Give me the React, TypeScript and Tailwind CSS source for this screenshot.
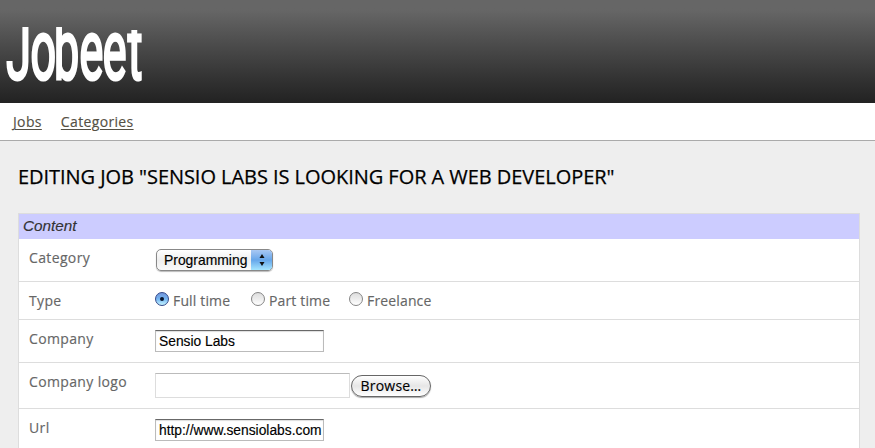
import type { ReactNode } from "react";

function Logo() {
  return (
    <svg role="img" aria-label="Jobeet" className="block h-[103px] w-[160px]" viewBox="0 0 160 103">
      <defs>
        <clipPath id="wordmark-top">
          <path d="M0 27H127V30H143.5V84H0Z" />
        </clipPath>
      </defs>
      <g clipPath="url(#wordmark-top)">
        <text
          transform="scale(0.54 1)"
          x="11.5 56.5 100 147 190.5 236.5"
          y="79.5"
          className="fill-white stroke-white font-[Roboto] text-[83px] font-normal"
          strokeWidth="3.2"
        >
          Jobeet
        </text>
      </g>
    </svg>
  );
}

function Radio({ label, checked = false, className = "" }: { label: string; checked?: boolean; className?: string }) {
  return (
    <label className={`flex items-start ${className}`}>
      <span
        className={`mt-[10px] flex h-[14px] w-[14px] shrink-0 items-center justify-center rounded-full border ${
          checked
            ? "border-[#314789] bg-linear-to-b from-[#7196db] via-[#75b5f1] to-[#c5f5ff]"
            : "border-[#858585] bg-linear-to-b from-[#dedede] via-[#ededed] to-white"
        }`}
      >
        {checked && <span className="h-[4px] w-[4px] rounded-full bg-[#07142e]" />}
      </span>
      <span className="ml-[4px] mt-[9px] whitespace-nowrap leading-5 tracking-[0.15px]">{label}</span>
    </label>
  );
}

function Row({ label, height, children }: { label: string; height: string; children: ReactNode }) {
  return (
    <div className={`flex border-b border-[#dddddd] ${height}`}>
      <div className="w-[136px] shrink-0 pl-[10px] pt-[9px] leading-5 tracking-[0.36px]">{label}</div>
      {children}
    </div>
  );
}

function TextInput({ value }: { value: string }) {
  return (
    <input
      readOnly
      value={value}
      className="mt-[10px] h-[22px] w-[169px] border border-[#bbbbbb] border-t-[#686868] bg-white pl-[3px] pr-px font-['Liberation_Sans'] text-[13.8px] text-black shadow-[inset_0_1px_1px_#dddddd] outline-none"
    />
  );
}

export default function App() {
  return (
    <div className="h-[448px] overflow-hidden bg-[#eeeeee] font-['Open_Sans',sans-serif] text-[14px] text-[#666666] [-webkit-text-stroke:0.15px]">
      <header className="h-[103px] bg-linear-to-b from-[#666666] from-10% to-[#222222] [-webkit-text-stroke:initial]">
        <Logo />
      </header>
      <nav className="flex h-[38px] gap-[19px] border-b border-[#aaaaaa] bg-white pl-[13px] pt-[9px] leading-5 tracking-[0.35px] text-[#555044]">
        <a className="underline underline-offset-2">Jobs</a>
        <a className="underline underline-offset-2">Categories</a>
      </nav>
      <main className="pl-[18px]">
        <h1 className="h-[72px] whitespace-nowrap pt-[21px] text-[20px] leading-[30px] tracking-[-0.05px] text-black [-webkit-text-stroke:0.25px]">
          EDITING JOB "SENSIO LABS IS LOOKING FOR A WEB DEVELOPER"
        </h1>
        <section className="w-[842px] border border-[#dddddd] bg-white">
          <h2 className="h-[25px] bg-[#ccccff] pl-[4px] font-['Liberation_Sans'] text-[15.3px] italic leading-[24px] text-[#333333]">
            Content
          </h2>
          <Row label="Category" height="h-[43px]">
            <div className="ml-[1px] mt-[10px] flex h-[22px] w-[117px] overflow-hidden rounded-[5px] border border-[#888888] bg-linear-to-b from-white via-[#eeeeee] to-[#fafafa] shadow-[0_1px_1px_#bbbbbb]">
              <span className="w-[94px] pl-[7px] font-['Liberation_Sans'] text-[13.9px] leading-[21px] text-black">
                Programming
              </span>
              <span className="flex flex-1 items-center justify-center bg-linear-to-b from-[#a9c8f3] via-[#66a6ea] to-[#a4e5ff]">
                <svg className="h-[12px] w-[6px]" viewBox="0 0 6 12">
                  <path d="M3 0L5.5 4H.5ZM3 12L.5 8H5.5Z" fill="#111111" />
                </svg>
              </span>
            </div>
          </Row>
          <Row label="Type" height="h-[38px]">
            <div className="flex">
              <Radio label="Full time" checked className="w-[96px]" />
              <Radio label="Part time" className="w-[98px]" />
              <Radio label="Freelance" />
            </div>
          </Row>
          <Row label="Company" height="h-[43px]">
            <TextInput value="Sensio Labs" />
          </Row>
          <Row label="Company logo" height="h-[46px]">
            <div className="mt-[10px] h-[25px] w-[195px] border border-[#dddddd] border-t-[#bbbbbb]" />
            <button className="ml-[1px] mt-[12px] h-[22px] w-[80px] rounded-full border border-[#666666] bg-linear-to-b from-white via-[#e6e6e6] to-white text-[14px] leading-[18px] tracking-[0.2px] text-black shadow-[0_1px_1px_#aaaaaa] [-webkit-text-stroke:0.15px]">
              Browse…
            </button>
          </Row>
          <Row label="Url" height="h-[43px]">
            <TextInput value="http://www.sensiolabs.com" />
          </Row>
        </section>
      </main>
    </div>
  );
}
